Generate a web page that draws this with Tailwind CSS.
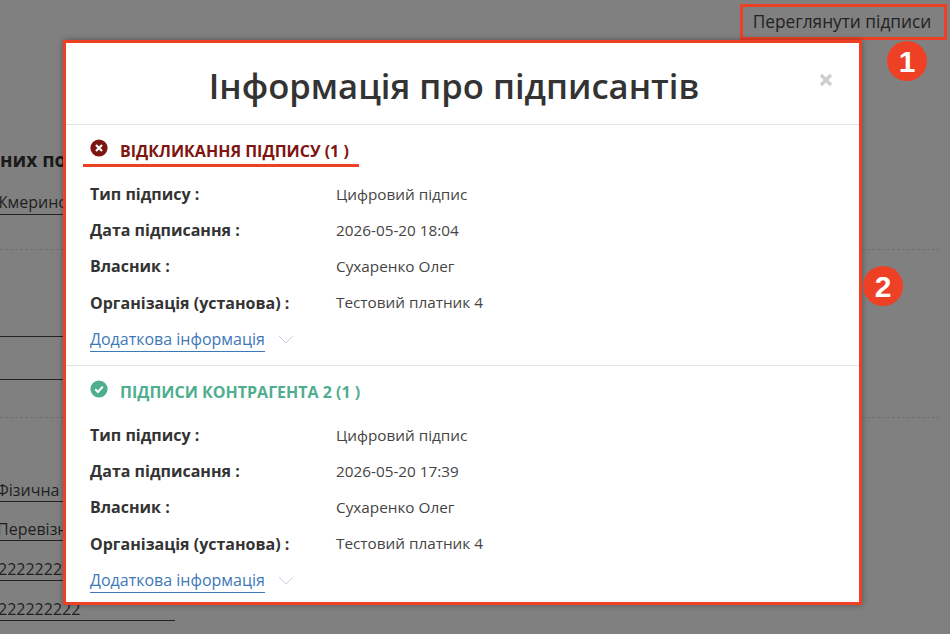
<!DOCTYPE html>
<html lang="en">
<head>
    <meta charset="UTF-8">
    <title>Підписи</title>
    <script src="https://cdn.jsdelivr.net/npm/@tailwindcss/browser@4"></script>
</head>
<body class="m-0 overflow-hidden">
    <div class="relative w-[950px] h-[634px] overflow-hidden bg-[#808080] font-['Open_Sans',sans-serif] text-[#1f1f1f]">
        <!-- Page behind the overlay -->
        <div class="flex justify-end h-[40px] pt-[4px] pr-[3px]">
            <div class="w-[207px] h-[36px] border-[3px] border-[#ee4025] flex items-center justify-center pr-[3px] text-[17.3px] text-[#222]">Переглянути підписи</div>
        </div>
        <div>
            <div class="mt-[108px] h-[24px] w-[64px] text-[19px] font-bold leading-[24px] whitespace-nowrap text-[#1a1a1a]">них показників</div>
            <div class="mt-[17px] w-[64px] h-[26px] overflow-hidden border-b border-[#222] text-[16px] leading-[26px] whitespace-nowrap -indent-[6px]">Жмеринська</div>
            <div class="mt-[34px] border-t border-dashed border-[#707070] mr-[10px]"></div>
            <div class="mt-[86px] w-[64px] border-b border-[#222]"></div>
            <div class="mt-[42px] w-[64px] border-b border-[#222]"></div>
            <div class="mt-[37px] border-t border-dashed border-[#707070] mr-[10px]"></div>
            <div class="mt-[60px] w-[64px] h-[24px] overflow-hidden border-b border-[#222] text-[16px] leading-[24px] whitespace-nowrap -indent-[4px]">Фізична особа</div>
            <div class="mt-[15px] w-[64px] h-[24px] overflow-hidden border-b border-[#222] text-[16px] leading-[24px] whitespace-nowrap -indent-[3px]">Перевізник</div>
            <div class="mt-[16px] w-[64px] h-[24px] overflow-hidden border-b border-[#222] text-[16px] leading-[24px] whitespace-nowrap -indent-[2px]">22222222222</div>
            <div class="mt-[16px] w-[175px] h-[24px] border-b border-[#222] text-[16px] leading-[24px] whitespace-nowrap -indent-[2px]">222222222</div>
        </div>

        <!-- Modal -->
        <div class="absolute left-[63px] top-[40px] w-[799px] h-[565px] bg-white border-[3px] border-[#ee4025] shadow-[0_0_6px_rgba(0,0,0,0.35)] text-[#333]">
            <div class="relative h-[82px] border-b border-[#e5e5e5] flex items-center justify-center pr-[17px]">
                <h1 class="text-[34.6px] font-semibold text-[#333] leading-none mt-[5px]">Інформація про підписантів</h1>
                <svg class="absolute right-[26px] top-[30px]" width="14" height="14" viewBox="0 0 14 14">
                    <path d="M2 2 L12 12 M12 2 L2 12" stroke="#cfcfcf" stroke-width="3.4" fill="none"/>
                </svg>
            </div>

            <!-- Revocation -->
            <section class="relative h-[241px] border-b border-[#e5e5e5] pl-[24px]">
                <div class="flex items-center h-[26px] absolute left-[24px] top-[13px]">
                    <svg class="mb-[6px]" width="18" height="18" viewBox="0 0 18 18">
                        <circle cx="9" cy="9" r="8.6" fill="#7e1510"/>
                        <path d="M6 6 L12 12 M12 6 L6 12" stroke="#fff" stroke-width="2.2" fill="none"/>
                    </svg>
                    <span class="ml-[12px] text-[16px] font-bold text-[#7e1510] whitespace-nowrap">ВІДКЛИКАННЯ ПІДПИСУ (1 )</span>
                </div>
                <div class="absolute left-[17px] top-[39px] w-[276px] h-[3px] bg-[#ee4025]"></div>
                <div class="pt-[51px]">
                    <div class="flex h-[36px] items-center text-[15.3px] text-[#444]"><span class="w-[246px] font-bold text-[16px] text-[#333]">Тип підпису :</span><span>Цифровий підпис</span></div>
                    <div class="flex h-[36px] items-center text-[15.3px] text-[#444]"><span class="w-[246px] font-bold text-[16px] text-[#333]">Дата підписання :</span><span>2026-05-20 18:04</span></div>
                    <div class="flex h-[36px] items-center text-[15.3px] text-[#444]"><span class="w-[246px] font-bold text-[16px] text-[#333]">Власник :</span><span>Сухаренко Олег</span></div>
                    <div class="flex h-[37px] items-center text-[15.3px] text-[#444]"><span class="w-[246px] font-bold text-[16px] text-[#333]">Організація (установа) :</span><span>Тестовий платник 4</span></div>
                    <div class="flex items-center h-[36px] pt-[2px] text-[16px] text-[#3d78b8]">
                        <span class="border-b border-[#3d78b8] leading-[23px]">Додаткова інформація</span>
                        <svg class="ml-[13px] mb-[2px]" width="16" height="9" viewBox="0 0 16 9"><path d="M1 1 L8 8 L15 1" stroke="#c3d3e6" stroke-width="1" fill="none"/></svg>
                    </div>
                </div>
            </section>

            <!-- Counterparty -->
            <section class="relative pl-[24px]">
                <div class="flex items-center h-[26px] absolute left-[24px] top-[12px]">
                    <svg class="mb-[4px]" width="18" height="18" viewBox="0 0 18 18">
                        <circle cx="9" cy="9" r="8.6" fill="#4fae90"/>
                        <path d="M5.2 9.2 L8 12 L12.8 6.6" stroke="#fff" stroke-width="2" fill="none"/>
                    </svg>
                    <span class="ml-[12px] text-[16px] font-bold text-[#4fae90] mt-[2px] whitespace-nowrap">ПІДПИСИ КОНТРАГЕНТА 2 (1 )</span>
                </div>
                <div class="pt-[51px]">
                    <div class="flex h-[36px] items-center text-[15.3px] text-[#444]"><span class="w-[246px] font-bold text-[16px] text-[#333]">Тип підпису :</span><span>Цифровий підпис</span></div>
                    <div class="flex h-[36px] items-center text-[15.3px] text-[#444]"><span class="w-[246px] font-bold text-[16px] text-[#333]">Дата підписання :</span><span>2026-05-20 17:39</span></div>
                    <div class="flex h-[36px] items-center text-[15.3px] text-[#444]"><span class="w-[246px] font-bold text-[16px] text-[#333]">Власник :</span><span>Сухаренко Олег</span></div>
                    <div class="flex h-[37px] items-center text-[15.3px] text-[#444]"><span class="w-[246px] font-bold text-[16px] text-[#333]">Організація (установа) :</span><span>Тестовий платник 4</span></div>
                    <div class="flex items-center h-[36px] pt-[2px] text-[16px] text-[#3d78b8]">
                        <span class="border-b border-[#3d78b8] leading-[23px]">Додаткова інформація</span>
                        <svg class="ml-[13px] mb-[2px]" width="16" height="9" viewBox="0 0 16 9"><path d="M1 1 L8 8 L15 1" stroke="#c3d3e6" stroke-width="1" fill="none"/></svg>
                    </div>
                </div>
            </section>
        </div>

        <!-- Numbered callouts -->
        <div class="absolute left-[887px] top-[41px] w-[40px] h-[40px] rounded-full bg-[#ee4025] text-white flex items-center justify-center font-['Liberation_Sans',sans-serif] font-bold text-[30px]">1</div>
        <div class="absolute left-[863px] top-[266px] w-[40px] h-[40px] rounded-full bg-[#ee4025] text-white flex items-center justify-center font-['Liberation_Sans',sans-serif] font-bold text-[30px]">2</div>
    </div>
</body>
</html>
